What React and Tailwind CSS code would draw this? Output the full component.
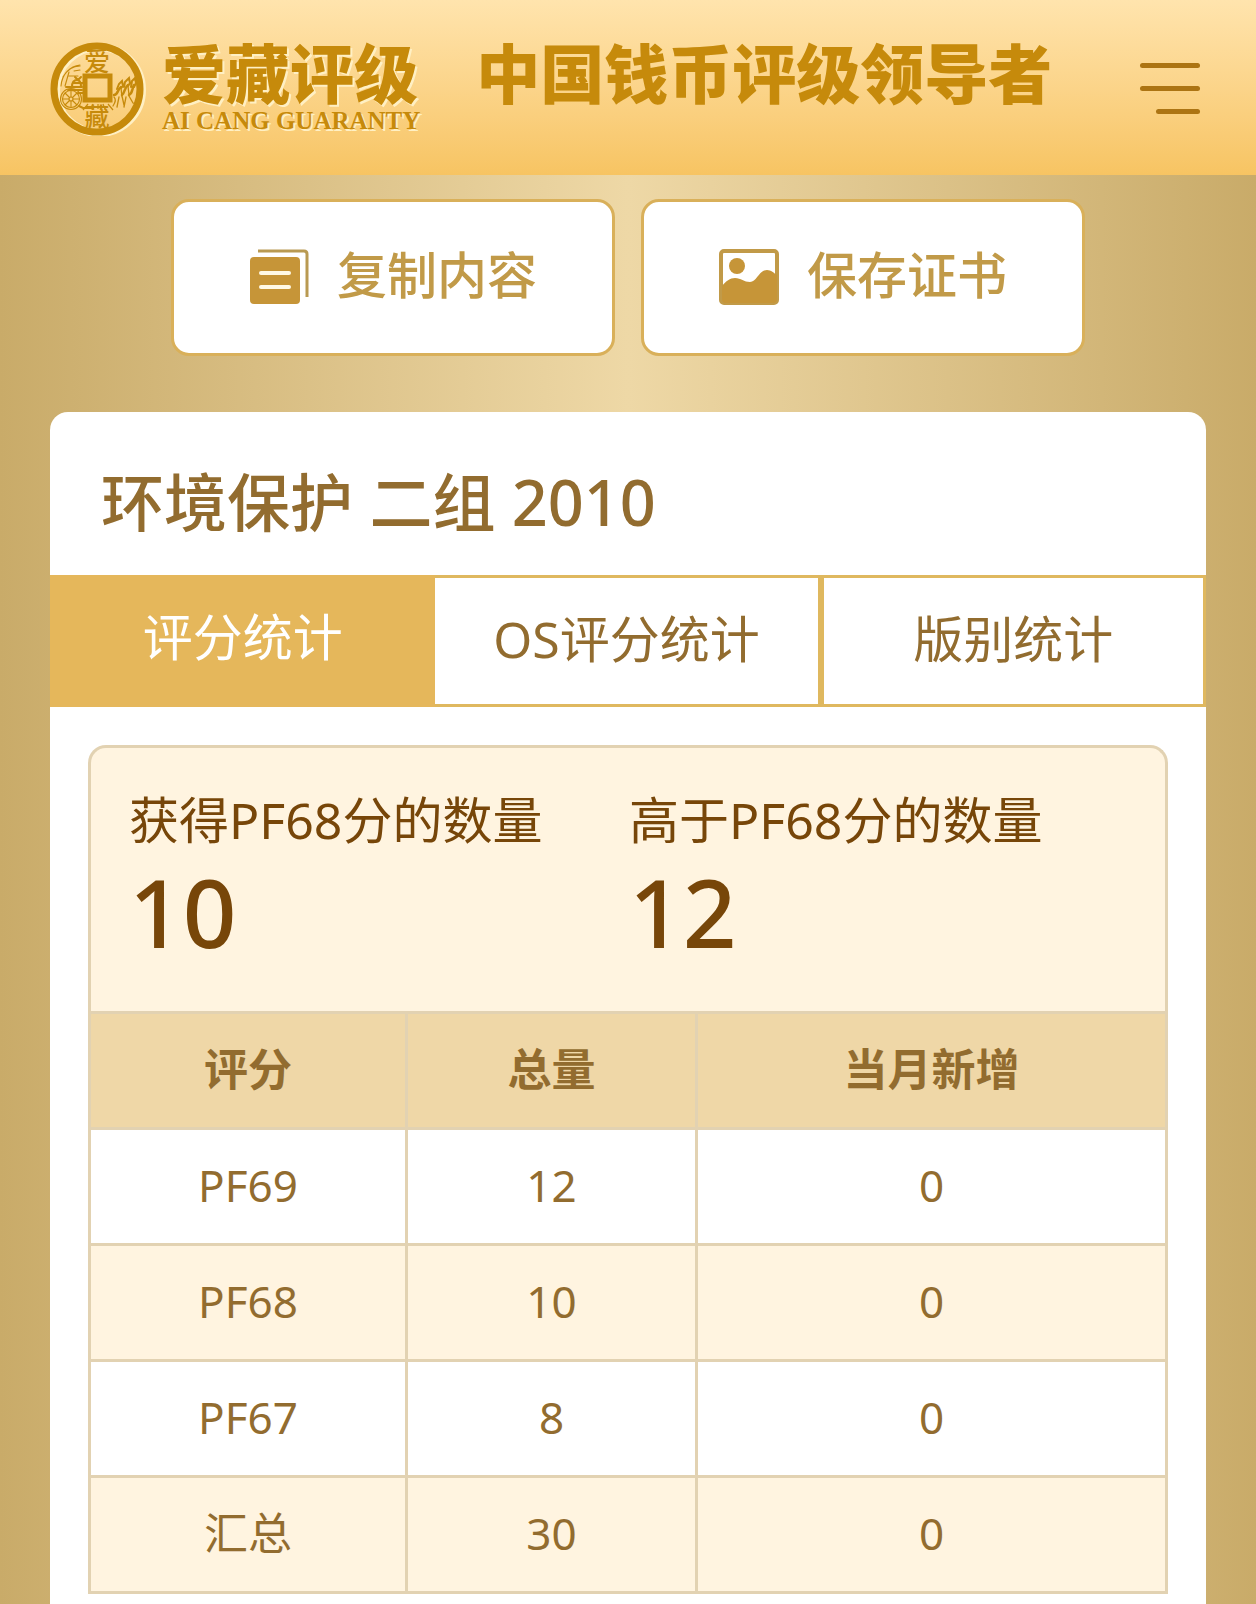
import { useState } from 'react'

const TABS = ['评分统计', 'OS评分统计', '版别统计']

const COUNTS = [
  { label: '获得PF68分的数量', value: 10 },
  { label: '高于PF68分的数量', value: 12 },
]

const ROWS = [
  { grade: 'PF69', total: 12, added: 0 },
  { grade: 'PF68', total: 10, added: 0 },
  { grade: 'PF67', total: 8, added: 0 },
  { grade: '汇总', total: 30, added: 0 },
]

function CoinLogo() {
  return (
    <svg viewBox="0 0 96 96" className="size-24 shrink-0" fill="none" stroke="#c68a0b" aria-hidden="true">
      <circle cx="49" cy="50" r="43" stroke="#fff0c4" strokeWidth="8" />
      <circle cx="47" cy="49" r="43" strokeWidth="7" />
      {/* carriage */}
      <g strokeWidth="1.100" strokeLinecap="round">
        <circle cx="21" cy="59" r="10.500" />
        <circle cx="21" cy="59" r="8.500" />
        <circle cx="21" cy="59" r="2" />
        <path d="M21 57v-6M21 61v6M19 59h-6M23 59h6M19.500 57.500l-4-4M22.500 57.500l4-4M19.500 60.500l-4 4M22.500 60.500l4 4" />
        <path d="M11 46c1-12 9-20 19-21M13 37c4-7 10-11 17-11M15 46l4-14M24 31l6-1M19 36h9" />
        <path d="M16 47h16M22 47c0-5 2-7 5-7s4 3 4 7M25 37l3 3 3-3M18 50h14M29 66l4 2h10M24 43h9M28 53h5" strokeWidth="2" />
      </g>
      {/* horses */}
      <g strokeWidth="1.300" strokeLinecap="round">
        <path d="M71 47c-4 3-3 8-7 8M78 45c-4 3-3 8-6 10M84 45c-2 3-1 8-5 10" strokeWidth="2.500" />
        <path d="M67 49l2-5 3-3 1 5-2 2M74 47l1-5 4-4 1 5-2 3M81 47l1-6 3-3 1 5-2 4" strokeWidth="2" />
        <path d="M64 57c2 2 1 6-1 9M69 57l-2 10M72 56l2 9M76 57l-2 10M79 56l4 7 3 1M71 48l1 9M78 46l1 9" />
      </g>
      <path d="M38 64l-5 6M43 64l-2 5M48 64v5M53 64l2 5M58 64l5 6" strokeWidth="1.200" />
      <rect x="35" y="36" width="25" height="24" strokeWidth="5" />
      <g fill="#c68a0b" stroke="none" className="font-['Noto_Sans_CJK_SC',sans-serif] font-medium" textAnchor="middle">
        <text x="47" y="31" className="text-[26px]">爱</text>
        <text x="47" y="86" className="text-[25px]">藏</text>
      </g>
    </svg>
  )
}

function CopyIcon() {
  return (
    <svg viewBox="0 0 60 56" className="h-14 w-15 shrink-0" fill="none" aria-hidden="true">
      <path d="M9 2h46q3 0 3 3v43" stroke="#b99a52" strokeWidth="3" />
      <rect x="1" y="8" width="50" height="47" rx="4" fill="#c69538" />
      <path d="M12 24h28M12 38h28" stroke="#fff9e6" strokeWidth="4" strokeLinecap="round" />
    </svg>
  )
}

function ImageIcon() {
  return (
    <svg viewBox="0 0 60 56" className="h-14 w-15 shrink-0" fill="none" aria-hidden="true">
      <rect x="2" y="2" width="56" height="52" rx="3" stroke="#c19a48" strokeWidth="4" />
      <circle cx="18" cy="17" r="8" fill="#c69538" />
      <path d="M3 37C7 32 11 29 16 29c6 0 9 4 15 4 7 0 9-12 17-12 4 0 7 3 10 5v24q0 4-4 4H7q-4 0-4-4z" fill="#c69538" />
    </svg>
  )
}

function ActionButton({ icon: Icon, children }) {
  return (
    <button type="button"
      className="flex h-[157px] flex-1 items-center justify-center gap-7 rounded-[18px] border-3 border-[#d9b05a] bg-white pb-[2px] text-[50px] leading-none font-medium text-[#c19a48]">
      <Icon />
      <span className="pb-1">{children}</span>
    </button>
  )
}

export default function App() {
  const [tab, setTab] = useState(0)

  return (
    <div className="flex min-h-screen flex-col bg-linear-to-r from-[#c9ab69] via-[#eed8a6] to-[#c9ab69] font-['Noto_Sans','Noto_Sans_CJK_SC',sans-serif] text-[#926c2f]">
      <header className="flex h-[175px] items-start bg-linear-to-b from-[#ffe4ad] to-[#f7c462] pt-10 pr-14 pl-[50px] font-['Noto_Sans_CJK_SC',sans-serif] text-[#c68a0b]">
        <a href="#home" className="flex items-start gap-4">
          <CoinLogo />
          <span className="flex flex-col whitespace-nowrap [text-shadow:2px_2px_0_#fff0c4]">
            <span className="text-[64px] leading-[60px] font-black">爱藏评级</span>
            <span className="font-['Liberation_Serif',serif] text-[25px] leading-[42px] font-bold">AI CANG GUARANTY</span>
          </span>
        </a>
        <p className="ml-14 text-[64px] leading-[60px] font-black whitespace-nowrap">中国钱币评级领导者</p>
        <button type="button" aria-label="菜单" className="mt-[23px] ml-auto flex flex-col items-end gap-[18px]">
          <span className="h-[5px] w-15 rounded-full bg-[#ac7413]" />
          <span className="h-[5px] w-15 rounded-full bg-[#ac7413]" />
          <span className="h-[5px] w-11 rounded-full bg-[#ac7413]" />
        </button>
      </header>

      <div className="flex gap-[26px] px-[171px] pt-6">
        <ActionButton icon={CopyIcon}>复制内容</ActionButton>
        <ActionButton icon={ImageIcon}>保存证书</ActionButton>
      </div>

      <main className="mx-[50px] mt-14 flex-1 rounded-t-[18px] bg-white">
        <h1 className="px-[51px] pt-[50px] pb-[33px] text-[63px] leading-[80px] font-medium">环境保护 二组 2010</h1>

        <div role="tablist" className="grid grid-cols-3">
          {TABS.map((name, i) => (
            <button key={name} type="button" role="tab" aria-selected={tab === i} onClick={() => setTab(i)}
              className={`h-[132px] text-[50px] leading-none ${
                tab === i
                  ? 'bg-[#e5b75b] pb-2 text-white'
                  : 'border-3 border-[#dfb85f] bg-white pb-1 nth-2:border-l-0'
              }`}>
              {name}
            </button>
          ))}
        </div>

        <section className="px-[38px] pt-[38px] pb-2">
          <dl className="grid h-[266px] grid-cols-[500px_1fr] rounded-t-[18px] border-3 border-b-0 border-[#e2d2b2] bg-[#fff4e0] px-[38px] pt-10 text-[#774609]">
            {COUNTS.map(c => (
              <div key={c.label}>
                <dt className="text-[50px] leading-[64px] whitespace-nowrap">{c.label}</dt>
                <dd className="text-[94px] leading-[120px] font-medium">{c.value}</dd>
              </div>
            ))}
          </dl>
          <table className="w-full table-fixed border-collapse text-center text-[44px] leading-none">
            <colgroup>
              <col className="w-[317px]" />
              <col className="w-[290px]" />
              <col />
            </colgroup>
            <thead>
              <tr className="h-[116px] bg-[#efd7a7]">
                {['评分', '总量', '当月新增'].map(h => (
                  <th key={h} scope="col" className="border-3 border-[#e2d2b2] pb-1 font-bold">{h}</th>
                ))}
              </tr>
            </thead>
            <tbody>
              {ROWS.map(r => (
                <tr key={r.grade} className="h-[116px] even:bg-[#fff4e0]">
                  <td className="border-3 border-[#e2d2b2] pb-1">{r.grade}</td>
                  <td className="border-3 border-[#e2d2b2] pb-1">{r.total}</td>
                  <td className="border-3 border-[#e2d2b2] pb-1">{r.added}</td>
                </tr>
              ))}
            </tbody>
          </table>
        </section>
      </main>
    </div>
  )
}
